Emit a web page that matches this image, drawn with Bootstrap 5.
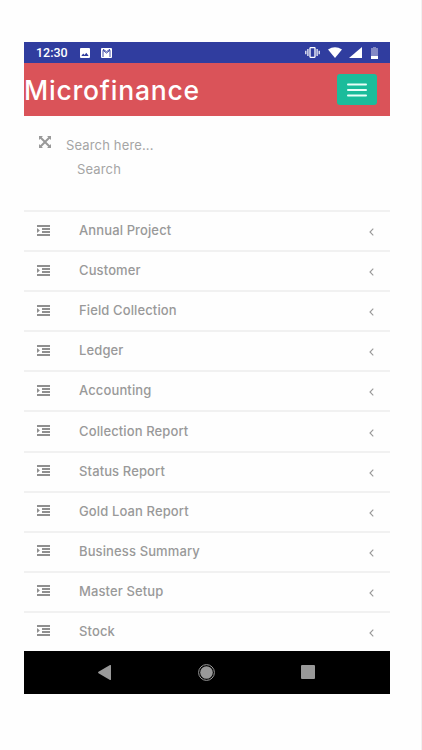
<!DOCTYPE html>
<html lang="en">
<head>
<meta charset="utf-8">
<meta name="viewport" content="width=device-width, initial-scale=1">
<title>Microfinance</title>
<link href="https://cdn.jsdelivr.net/npm/bootstrap@5.3.0/dist/css/bootstrap.min.css" rel="stylesheet">
<style>
body{background:#fefefe;font-family:Inter,"Open Sans",sans-serif;height:750px;overflow:hidden;border-right:1px solid #f1f1f1}
svg{display:block;flex:none}
.phone{width:366px;margin:42px 0 0 24px;height:652px}
.statusbar{height:21.3px;background:#303d9f;color:#fff;font:500 12.5px/21px Roboto,sans-serif;padding:0 12px 0 12px}
.pic{margin-left:12px}
.mail{margin-left:11px}
.cell{margin-left:7px}
.battery{margin-left:9px}
.topbar{height:53.2px;background:#da5359;padding-right:13px}
.brand{color:#fff;font-weight:500;font-size:26.5px;line-height:50px;letter-spacing:.78px}
.menu-btn{width:40px;height:31px;background:#1bbc9b;border-radius:3px;padding:0}
.search{height:93.5px;color:#a5a5a5;font-size:13px;line-height:24px;padding:16.5px 0 0 15px;letter-spacing:.15px}
.expand{margin-top:3px}
.fields{margin-left:15px}
.find{padding-left:11px}
.entry{height:40.1px;border-top:2px solid #f1f1f1;color:#999;font-weight:500;font-size:13px;line-height:20px;padding:0 16px 2px 13px}
.entry-label{margin-left:29px;letter-spacing:.12px}
.arrow{margin-top:4px}
.list{height:441px;overflow:hidden}
.navkeys{height:43px;background:#000;padding:0 75px 0 74px}
</style>
<script src="https://cdn.jsdelivr.net/npm/bootstrap@5.3.0/dist/js/bootstrap.bundle.min.js"></script>
</head>
<body>
<svg width="0" height="0" class="position-absolute" aria-hidden="true">
<symbol id="indent" viewBox="0 0 13 11"><path fill="#8f8f8f" d="M0 0h13v2H0zM5 3h8v2H5zM5 6h8v2H5zM0 9h13v2H0zM0 3v5l2.900-2.500z"/></symbol>
<symbol id="left" viewBox="0 0 5 8"><path fill="none" stroke="#999" stroke-width="1.100" d="M4.300.7 1 4l3.300 3.300"/></symbol>
</svg>
<div class="phone d-flex flex-column">
  <div class="statusbar d-flex align-items-center justify-content-between">
    <div class="d-flex align-items-center">
      <span>12:30</span>
      <svg class="pic" width="10" height="10" viewBox="0 0 10 10"><path fill="#fff" fill-rule="evenodd" d="M1 0h8q1 0 1 1v8q0 1-1 1H1Q0 10 0 9V1Q0 0 1 0M1.300 8h7.400L6.300 4.700 4.500 7 3.200 5.500z"/></svg>
      <svg class="mail" width="11" height="10" viewBox="0 0 11 10"><rect width="11" height="10" rx="1" fill="#fff"/><path fill="none" stroke="#303d9f" stroke-width=".9" d="M2 9V2.200l3.500 2.900L9 2.200V9M2 1.200l3.500 2.500L9 1.200"/></svg>
    </div>
    <div class="d-flex align-items-center">
      <svg width="15" height="11" viewBox="0 0 15 11"><rect x="5" y=".7" width="5" height="9.600" rx=".5" fill="none" stroke="#fff" stroke-width="1.300"/><path stroke="#fff" stroke-width="1.200" d="M2.900 2v7M12.100 2v7M.8 3.800v3.500M14.200 3.800v3.500"/></svg>
      <svg class="ms-2" width="14" height="11" viewBox="0 0 14 11"><path fill="#fff" d="M0 2.600Q7-2.100 14 2.600L7 11z"/></svg>
      <svg class="cell" width="13" height="11" viewBox="0 0 13 11"><path fill="#fff" d="M13 0v11H0z"/></svg>
      <svg class="battery" width="7" height="12" viewBox="0 0 7 12"><path fill="#8389c5" d="M2 0h3v1h2v11H0V1h2z"/><path fill="#fff" d="M0 9h7v3H0z"/></svg>
    </div>
  </div>
  <div class="topbar d-flex align-items-center justify-content-between">
    <span class="brand">Microfinance</span>
    <button class="btn menu-btn d-flex align-items-center justify-content-center" aria-label="Menu"><svg width="20" height="14" viewBox="0 0 20 14"><path stroke="#e9fff9" stroke-width="1.800" stroke-linecap="round" d="M.9 1.500h18.200M.9 7h18.200M.9 12.500h18.200"/></svg></button>
  </div>
  <div class="search d-flex">
    <svg class="expand" width="12" height="12" viewBox="0 0 12 12"><path fill="#999" d="M0 0h4L2.700 1.300 6 4.600l3.300-3.300L8 0h4v4l-1.300-1.300L7.400 6l3.300 3.300L12 8v4H8l1.300-1.300L6 7.400l-3.300 3.300L4 12H0V8l1.300 1.300L4.600 6 1.300 2.700 0 4z"/></svg>
    <div class="fields"><div class="hint">Search here...</div><div class="find">Search</div></div>
  </div>
  <div class="list">
    <div class="entry d-flex align-items-center"><svg width="13" height="11"><use href="#indent"/></svg><span class="entry-label">Annual Project</span><svg class="arrow ms-auto" width="5" height="8"><use href="#left"/></svg></div>
    <div class="entry d-flex align-items-center"><svg width="13" height="11"><use href="#indent"/></svg><span class="entry-label">Customer</span><svg class="arrow ms-auto" width="5" height="8"><use href="#left"/></svg></div>
    <div class="entry d-flex align-items-center"><svg width="13" height="11"><use href="#indent"/></svg><span class="entry-label">Field Collection</span><svg class="arrow ms-auto" width="5" height="8"><use href="#left"/></svg></div>
    <div class="entry d-flex align-items-center"><svg width="13" height="11"><use href="#indent"/></svg><span class="entry-label">Ledger</span><svg class="arrow ms-auto" width="5" height="8"><use href="#left"/></svg></div>
    <div class="entry d-flex align-items-center"><svg width="13" height="11"><use href="#indent"/></svg><span class="entry-label">Accounting</span><svg class="arrow ms-auto" width="5" height="8"><use href="#left"/></svg></div>
    <div class="entry d-flex align-items-center"><svg width="13" height="11"><use href="#indent"/></svg><span class="entry-label">Collection Report</span><svg class="arrow ms-auto" width="5" height="8"><use href="#left"/></svg></div>
    <div class="entry d-flex align-items-center"><svg width="13" height="11"><use href="#indent"/></svg><span class="entry-label">Status Report</span><svg class="arrow ms-auto" width="5" height="8"><use href="#left"/></svg></div>
    <div class="entry d-flex align-items-center"><svg width="13" height="11"><use href="#indent"/></svg><span class="entry-label">Gold Loan Report</span><svg class="arrow ms-auto" width="5" height="8"><use href="#left"/></svg></div>
    <div class="entry d-flex align-items-center"><svg width="13" height="11"><use href="#indent"/></svg><span class="entry-label">Business Summary</span><svg class="arrow ms-auto" width="5" height="8"><use href="#left"/></svg></div>
    <div class="entry d-flex align-items-center"><svg width="13" height="11"><use href="#indent"/></svg><span class="entry-label">Master Setup</span><svg class="arrow ms-auto" width="5" height="8"><use href="#left"/></svg></div>
    <div class="entry d-flex align-items-center"><svg width="13" height="11"><use href="#indent"/></svg><span class="entry-label">Stock</span><svg class="arrow ms-auto" width="5" height="8"><use href="#left"/></svg></div>
  </div>
  <div class="navkeys d-flex align-items-center justify-content-between">
    <svg width="13" height="15" viewBox="0 0 13 15"><path fill="#999" d="M12 0q1-.5 1 1v13q0 1.500-1 1L.5 8.200q-.9-.7 0-1.400z"/></svg>
    <svg width="17" height="17" viewBox="0 0 17 17"><circle cx="8.500" cy="8.500" r="7.900" fill="none" stroke="#999"/><circle cx="8.500" cy="8.500" r="6.300" fill="#999"/></svg>
    <svg width="14" height="14" viewBox="0 0 14 14"><rect width="14" height="14" rx="1" fill="#999"/></svg>
  </div>
</div>
</body>
</html>
